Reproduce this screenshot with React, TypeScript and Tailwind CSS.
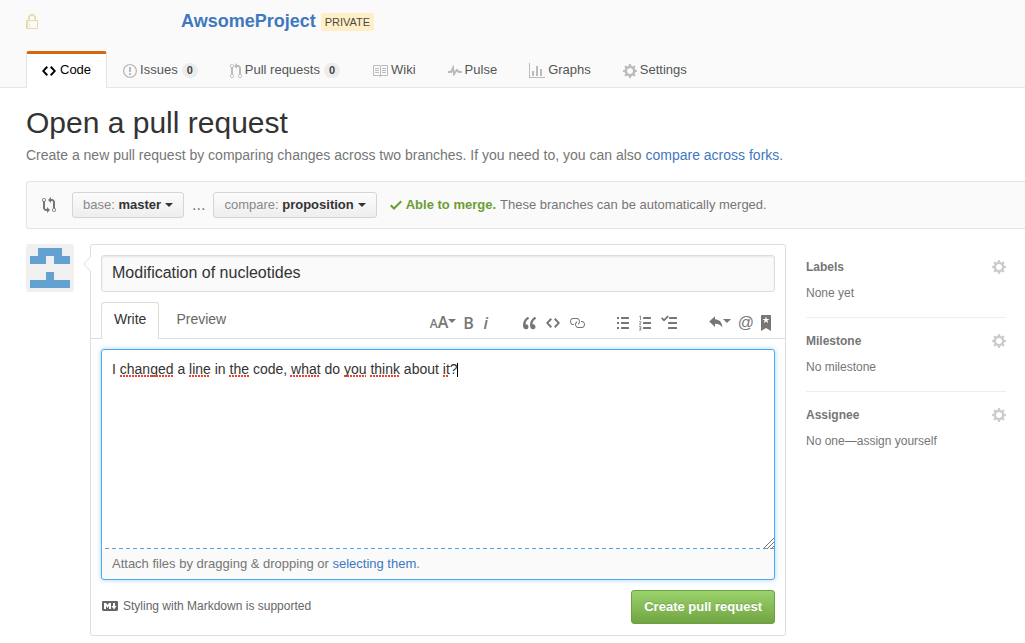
import React, { useState } from "react";

type GlyphProps = { d: string; w: number; h?: number; vb: string; className?: string };

function Glyph({ d, w, h = 16, vb, className = "" }: GlyphProps) {
  return (
    <svg width={w} height={h} viewBox={vb} fill="currentColor" aria-hidden="true" className={`shrink-0 ${className}`}>
      <path fillRule="evenodd" d={d} />
    </svg>
  );
}

const paths = {
  lock: "M4 13H3v-1h1v1zm8-6v7c0 .55-.45 1-1 1H1c-.55 0-1-.45-1-1V7c0-.55.45-1 1-1h1V4c0-2.2 1.8-4 4-4s4 1.8 4 4v2h1c.55 0 1 .45 1 1zM3.8 6h4.41V4c0-1.22-.98-2.2-2.2-2.2-1.22 0-2.2.98-2.2 2.2v2H3.8zM11 7H2v7h9V7zM4 8H3v1h1V8zm0 2H3v1h1v-1z",
  code: "M9.5 3L8 4.5 11.5 8 8 11.5 9.5 13 14 8 9.5 3zm-5 0L0 8l4.5 5L6 11.5 2.5 8 6 4.5 4.5 3z",
  issue: "M7 2.3c3.14 0 5.7 2.56 5.7 5.7s-2.56 5.7-5.7 5.7A5.71 5.71 0 0 1 1.3 8c0-3.14 2.56-5.7 5.7-5.7zM7 1C3.14 1 0 4.14 0 8s3.14 7 7 7 7-3.14 7-7-3.14-7-7-7zm1 3H6v5h2V4zm0 6H6v2h2v-2z",
  pull: "M11 11.28V5c-.03-.78-.34-1.47-.94-2.06C9.46 2.35 8.78 2.03 8 2H7V0L4 3l3 3V4h1c.27.02.48.11.69.31.21.2.3.42.31.69v6.28A1.993 1.993 0 0 0 10 15a1.993 1.993 0 0 0 1-3.72zm-1 2.92c-.66 0-1.2-.55-1.2-1.2 0-.65.55-1.2 1.2-1.2.65 0 1.2.55 1.2 1.2 0 .65-.55 1.2-1.2 1.2zM4 3c0-1.11-.89-2-2-2a1.993 1.993 0 0 0-1 3.72v6.56A1.993 1.993 0 0 0 2 15a1.993 1.993 0 0 0 1-3.72V4.72c.59-.34 1-.98 1-1.72zm-.8 10c0 .66-.55 1.2-1.2 1.2-.65 0-1.2-.55-1.2-1.2 0-.65.55-1.2 1.2-1.2.65 0 1.2.55 1.2 1.2zM2 4.2C1.34 4.2.8 3.65.8 3c0-.65.55-1.2 1.2-1.2.65 0 1.2.55 1.2 1.2 0 .65-.55 1.2-1.2 1.2z",
  book: "M3 5h4v1H3V5zm0 3h4V7H3v1zm0 2h4V9H3v1zm11-5h-4v1h4V5zm0 2h-4v1h4V7zm0 2h-4v1h4V9zm2-6v9c0 .55-.45 1-1 1H9.5l-1 1-1-1H2c-.55 0-1-.45-1-1V3c0-.55.45-1 1-1h5.5l1 1 1-1H15c.55 0 1 .45 1 1zm-8 .5L7.5 3H2v9h6V3.5zm7-.5H9.5l-.5.5V12h6V3z",
  pulse: "M11.5 8L8.8 5.4 6.6 8.5 5.5 1.6 2.38 8H0v2h3.6l.9-1.8.9 5.4L9 8.5l1.6 1.5H14V8h-2.5z",
  graph: "M16 14v1H0V0h1v14h15zM5 13H3V8h2v5zm4 0H7V3h2v10zm4 0h-2V6h2v7z",
  gear: "M14 8.77v-1.6l-1.94-.64-.45-1.09.88-1.84-1.13-1.13-1.81.91-1.09-.45-.69-1.92h-1.6l-.63 1.94-1.11.45-1.84-.88-1.13 1.13.91 1.81-.45 1.09L0 7.23v1.59l1.94.64.45 1.09-.88 1.84 1.13 1.13 1.81-.91 1.09.45.69 1.92h1.59l.63-1.94 1.11-.45 1.84.88 1.13-1.13-.92-1.81.47-1.09L14 8.75v.02zM7 11c-1.66 0-3-1.34-3-3s1.34-3 3-3 3 1.34 3 3-1.34 3-3 3z",
  compare: "M5 12H4c-.27-.02-.48-.11-.69-.31-.21-.2-.3-.42-.31-.69V4.72A1.993 1.993 0 0 0 2 1a1.993 1.993 0 0 0-1 3.72V11c.03.78.34 1.47.94 2.06.6.59 1.28.91 2.06.94h1v2l3-3-3-3v2zM2 1.8c.66 0 1.2.55 1.2 1.2 0 .65-.55 1.2-1.2 1.2C1.35 4.2.8 3.65.8 3c0-.65.55-1.2 1.2-1.2zm11 9.48V5c-.03-.78-.34-1.47-.94-2.06-.6-.59-1.28-.91-2.06-.94H9V0L6 3l3 3V4h1c.27.02.48.11.69.31.21.2.3.42.31.69v6.28A1.993 1.993 0 0 0 12 15a1.993 1.993 0 0 0 1-3.72zm-1 2.92c-.66 0-1.2-.55-1.2-1.2 0-.65.55-1.2 1.2-1.2.65 0 1.2.55 1.2 1.2 0 .65-.55 1.2-1.2 1.2z",
  check: "M12 5l-8 8-4-4 1.5-1.5L4 10l6.5-6.5L12 5z",
  quote: "M6.16 3.5C3.73 5.06 2.55 6.67 2.55 9.36c.16-.05.3-.05.44-.05 1.27 0 2.5.86 2.5 2.41 0 1.61-1.03 2.61-2.5 2.61-1.9 0-2.99-1.52-2.99-4.25 0-3.8 1.75-6.53 5.02-8.42L6.16 3.5zm7 0c-2.43 1.56-3.61 3.17-3.61 5.86.16-.05.3-.05.44-.05 1.27 0 2.5.86 2.5 2.41 0 1.61-1.03 2.61-2.5 2.61-1.89 0-2.98-1.52-2.98-4.25 0-3.8 1.75-6.53 5.02-8.42l1.14 1.84h-.01z",
  link: "M4 9h1v1H4c-1.5 0-3-1.69-3-3.5S2.55 3 4 3h4c1.45 0 3 1.69 3 3.5 0 1.41-.91 2.72-2 3.25V8.59c.58-.45 1-1.27 1-2.09C10 5.22 8.98 4 8 4H4c-.98 0-2 1.22-2 2.5S3 9 4 9zm9-3h-1v1h1c1 0 2 1.22 2 2.5S13.98 12 13 12H9c-.98 0-2-1.22-2-2.5 0-.83.42-1.64 1-2.09V6.25c-1.09.53-2 1.84-2 3.25C6 11.31 7.55 13 9 13h4c1.45 0 3-1.69 3-3.5S14.5 6 13 6z",
  reply: "M6 4.3c4.2.3 7 2.7 7.4 7.9C11.6 9.9 9.3 8.8 6 8.8V12L.2 6.5 6 1.2z",
  bookmark: "M9 0H1C.27 0 0 .27 0 1v15l5-3.09L10 16V1c0-.73-.27-1-1-1zm-.78 4.25L6.36 5.61l.72 2.16c.06.22-.02.28-.2.17L5 6.6 3.12 7.94c-.19.11-.25.05-.2-.17l.72-2.16-1.86-1.36c-.17-.16-.14-.23.09-.23l2.3-.03.7-2.16h.25l.7 2.16 2.3.03c.23 0 .27.08.09.23h.01z",
  markdown: "M14.85 3H1.15C.52 3 0 3.52 0 4.15v7.69C0 12.48.52 13 1.15 13h13.69c.64 0 1.15-.52 1.15-1.15v-7.7C16 3.52 15.48 3 14.85 3zM9 11H7V8L5.5 9.92 4 8v3H2V5h2l1.5 2L7 5h2v6zm2.99.5L9.5 8H11V5h2v3h1.5l-2.51 3.5z",
};

function Caret() {
  return (
    <svg width="8" height="4" viewBox="0 0 8 4" fill="currentColor" aria-hidden="true" className="shrink-0">
      <path d="M0 0h8L4 4z" />
    </svg>
  );
}

function ListIcon({ kind }: { kind: "bullets" | "numbers" | "tasks" }) {
  const long = kind === "tasks";
  return (
    <svg width={long ? 16 : 12} height="16" viewBox={long ? "0 0 16 16" : "0 0 12 16"} fill="currentColor" aria-hidden="true" className="shrink-0">
      <rect x={long ? 8 : 4} y="2" width="8" height="2" rx="0.5" />
      <rect x={long ? 7 : 4} y="7" width={long ? 9 : 8} height="2" rx="0.5" />
      <rect x={long ? 7 : 4} y="12" width={long ? 9 : 8} height="2" rx="0.5" />
      {kind === "bullets" && <path d="M0 2h2v2H0zM0 7h2v2H0zM0 12h2v2H0z" />}
      {kind === "numbers" && (
        <path d="M.3 1.4 1.5 1v4M0 6.7h1.8v1.2L.3 9.4H2M0 11.5h1.8v3.6H0M.4 13.3h1.4" fill="none" stroke="currentColor" strokeWidth="0.8" />
      )}
      {kind === "tasks" && <path d="M0 3.5 1.2 2.3 3 4 6.5.5 7.8 1.7 3 6.5z" />}
    </svg>
  );
}

function NavTab({ icon, label, count }: { icon: React.ReactNode; label: string; count?: number }) {
  return (
    <a href="#" className="flex h-9 items-center gap-[3px] px-4 text-[13px] text-[#555]">
      <span className="pt-[2px] text-[#bbb]">{icon}</span>
      <span>{label}</span>
      {count !== undefined && (
        <span className="ml-px rounded-full bg-[#ececec] px-[5px] text-[11px] leading-[15px] font-bold text-[#444]">{count}</span>
      )}
    </a>
  );
}

function BranchButton({ kind, name }: { kind: string; name: string }) {
  return (
    <button type="button" className="flex h-[26px] items-center gap-1 rounded-[3px] border border-[#d5d5d5] bg-linear-to-b from-[#fcfcfc] to-[#eee] px-[10px] text-[13px] text-[#888]">
      <span>
        {kind}: <b className="text-[#333]">{name}</b>
      </span>
      <span className="text-[#333]"><Caret /></span>
    </button>
  );
}

function Tool({ label, children }: { label: string; children: React.ReactNode }) {
  return (
    <button type="button" aria-label={label} className="flex h-5 items-center">
      {children}
    </button>
  );
}

function SideSection({ title, children }: { title: string; children: React.ReactNode }) {
  return (
    <section className="border-b border-[#eee] pt-[14px] pb-[15px] text-[12px] leading-[18px] text-[#767676] last:border-0">
      <div className="mb-2 flex items-center justify-between">
        <h2 className="font-bold">{title}</h2>
        <button type="button" aria-label={`Edit ${title}`} className="text-[#ccc]">
          <Glyph d={paths.gear} w={14} vb="0 0 14 16" />
        </button>
      </div>
      <p>{children}</p>
    </section>
  );
}

const misspelled = [
  [8, 61], [77, 98], [117, 137], [178, 207], [232, 254], [258, 288], [331, 336],
];

export default function App() {
  const [title, setTitle] = useState("Modification of nucleotides");
  const [body, setBody] = useState("I changed a line in the code, what do you think about it?");
  return (
    <div className="min-h-screen overflow-hidden bg-white font-['Liberation_Sans',Arial,sans-serif] text-[13px] text-[#333]">
      <header className="border-b border-[#e8e8e8] bg-[#fafafa] pl-[26px]">
        <div className="flex h-[51px] items-center pb-2">
          <Glyph d={paths.lock} w={12} vb="0 0 12 16" className="mr-[143px] text-[#e9dba5]" />
          <a href="#" className="text-[18px] font-bold text-[#4078c0]">AwsomeProject</a>
          <span className="ml-[5px] rounded-[3px] bg-[#ffefc6] px-1 text-[11px] leading-[18px] text-[#4c4a42]">PRIVATE</span>
        </div>
        <nav className="-mb-px flex h-[37px] items-end">
          <a href="#" aria-current="page" className="flex h-[37px] items-center gap-1 rounded-t-[3px] border-x border-t-3 border-x-[#e5e5e5] border-t-[#d26911] bg-white px-[15px] pb-[2px] text-[13px] text-black">
            <Glyph d={paths.code} w={14} vb="0 0 14 16" className="mt-[2px]" />
            Code
          </a>
          <NavTab icon={<Glyph d={paths.issue} w={14} vb="0 0 14 16" />} label="Issues" count={0} />
          <NavTab icon={<Glyph d={paths.pull} w={12} vb="0 0 12 16" />} label="Pull requests" count={0} />
          <NavTab icon={<Glyph d={paths.book} w={16} vb="0 0 16 16" />} label="Wiki" />
          <NavTab icon={<Glyph d={paths.pulse} w={14} vb="0 0 14 16" />} label="Pulse" />
          <NavTab icon={<Glyph d={paths.graph} w={16} vb="0 0 16 16" />} label="Graphs" />
          <NavTab icon={<Glyph d={paths.gear} w={14} vb="0 0 14 16" />} label="Settings" />
        </nav>
      </header>

      <main className="pl-[26px]">
        <h1 className="pt-[15px] text-[30px] leading-[40px] text-[#333]">Open a pull request</h1>
        <p className="mt-[2px] text-[14px] leading-[21px] text-[#767676]">
          Create a new pull request by comparing changes across two branches. If you need to, you can also{" "}
          <a href="#" className="text-[#4078c0]">compare across forks</a>.
        </p>

        <div className="mt-[15px] flex h-12 items-center rounded-l-[3px] border border-r-0 border-[#e5e5e5] bg-[#fafafa] pl-[15px] text-[13px] text-[#767676]">
          <Glyph d={paths.compare} w={14} vb="0 0 14 16" className="mr-4" />
          <BranchButton kind="base" name="master" />
          <span className="px-2 text-[16px] leading-5">...</span>
          <BranchButton kind="compare" name="proposition" />
          <span className="ml-[13px] flex items-center gap-1 font-bold text-[#6b9e32]">
            <Glyph d={paths.check} w={12} vb="0 0 12 16" />
            Able to merge.
          </span>
          <span className="ml-1">These branches can be automatically merged.</span>
        </div>

        <div className="mt-[15px] flex items-start pr-[19px]">
          <svg width="48" height="48" viewBox="0 0 48 48" aria-label="Avatar" role="img" className="shrink-0">
            <rect width="48" height="48" rx="3" fill="#f0f0f0" />
            <path d="M12 4h24v8h8v8H28v-8h-8v8H4v-8h8zM20 28h8v8h16v8H4v-8h16z" fill="#62a1d0" />
          </svg>

          <form className="relative ml-4 min-w-0 flex-1 rounded-[3px] border border-[#ddd]" onSubmit={(e) => e.preventDefault()}>
            <svg width="8" height="16" viewBox="0 0 8 16" aria-hidden="true" className="absolute top-[11px] -left-2">
              <path d="M8 0 .7 8 8 16" fill="#fff" stroke="#ddd" />
            </svg>
            <div className="px-[10px] pt-[10px]">
              <input
                aria-label="Title"
                value={title}
                onChange={(e) => setTitle(e.target.value)}
                className="block h-[37px] w-full rounded-[3px] border border-[#ddd] bg-[#fafafa] px-[10px] pb-[2px] text-[16px] text-[#333] shadow-[inset_0_1px_2px_rgba(0,0,0,0.075)] outline-none"
              />
            </div>

            <div className="mt-[10px] flex h-[37px] items-stretch border-b border-[#ddd] px-[10px] text-[14px]">
              <button type="button" className="-mb-px rounded-t-[3px] border border-b-0 border-[#ddd] bg-white px-3 pb-[3px] text-[#333]">Write</button>
              <button type="button" className="px-[17px] pb-[2px] text-[#666]">Preview</button>
              <div className="ml-auto flex items-center pt-[6px] pr-1 text-[#767676]">
                <div className="flex gap-[7px] font-['Open_Sans',sans-serif] font-semibold">
                  <Tool label="Text size">
                    <span className="flex items-baseline leading-4"><span className="text-[12px]">A</span><span className="text-[16px]">A</span></span>
                    <span className="pb-1"><Caret /></span>
                  </Tool>
                  <Tool label="Bold"><span className="text-[16px] leading-4">B</span></Tool>
                  <Tool label="Italic"><i className="w-[10px] text-[16px] leading-4">i</i></Tool>
                </div>
                <div className="ml-8 flex gap-[9px]">
                  <Tool label="Quote"><Glyph d={paths.quote} w={14} vb="0 0 14 16" /></Tool>
                  <Tool label="Code"><Glyph d={paths.code} w={14} vb="0 0 14 16" /></Tool>
                  <Tool label="Link"><Glyph d={paths.link} w={16} vb="0 0 16 16" /></Tool>
                </div>
                <div className="ml-8 flex gap-[10px]">
                  <Tool label="Bulleted list"><ListIcon kind="bullets" /></Tool>
                  <Tool label="Numbered list"><ListIcon kind="numbers" /></Tool>
                  <Tool label="Task list"><ListIcon kind="tasks" /></Tool>
                </div>
                <div className="ml-8 flex gap-[7px]">
                  <Tool label="Saved replies"><Glyph d={paths.reply} w={14} vb="0 0 14 16" /><span className="pb-1"><Caret /></span></Tool>
                  <Tool label="Mention"><span className="pb-px text-[16px] leading-4">@</span></Tool>
                  <Tool label="Reference"><Glyph d={paths.bookmark} w={10} vb="0 0 10 16" /></Tool>
                </div>
              </div>
            </div>

            <div className="p-[10px]">
              <div className="rounded-[3px] border border-[#51a7e8] bg-[#fafafa] shadow-[0_0_5px_rgba(81,167,232,0.5)]">
                <div className="relative">
                  <textarea
                    aria-label="Comment"
                    spellCheck={false}
                    value={body}
                    onChange={(e) => setBody(e.target.value)}
                    className="block h-[198px] w-full resize-none rounded-t-[3px] bg-white px-[10px] py-[9px] text-[14px] leading-5 text-[#333] outline-none"
                  />
                  <svg width="100%" height="1" aria-hidden="true" className="block bg-white">
                    <path d="M3 .5H4000" stroke="#51a7e8" strokeDasharray="4 3" />
                  </svg>
                  <svg width="350" height="20" viewBox="0 0 350 20" aria-hidden="true" className="pointer-events-none absolute top-[9px] left-[10px]">
                    {misspelled.map(([a, b]) => (
                      <path key={a} d={`M${a} 17H${b}`} stroke="#f0402f" strokeWidth="2" strokeDasharray="2 1" />
                    ))}
                    <path d="M345.5 4v14" stroke="#000" />
                  </svg>
                  <svg width="12" height="12" viewBox="0 0 12 12" aria-hidden="true" className="pointer-events-none absolute right-0 bottom-0">
                    <path d="M1 12 12 1M5 12l7-7M9 12l3-3" stroke="#777" />
                  </svg>
                </div>
                <p className="px-[10px] pt-1 pb-[5px] text-[13px] leading-[21px] text-[#767676]">
                  Attach files by dragging &amp; dropping or <a href="#" className="text-[#4078c0]">selecting them</a>.
                </p>
              </div>
              <div className="mt-[10px] mb-px flex items-center justify-between">
                <a href="#" className="flex items-center gap-[5px] pb-[2px] pl-px text-[12px] text-[#666]">
                  <Glyph d={paths.markdown} w={16} vb="0 0 16 16" />
                  Styling with Markdown is supported
                </a>
                <button type="submit" className="h-[34px] rounded-[3px] border border-[#6ba044] bg-linear-to-b from-[#9bd26b] to-[#71a543] px-3 text-[13px] font-bold text-white [text-shadow:0_-1px_0_rgba(0,0,0,0.15)]">
                  Create pull request
                </button>
              </div>
            </div>
          </form>

          <aside className="ml-5 w-[200px] shrink-0">
            <SideSection title="Labels">None yet</SideSection>
            <SideSection title="Milestone">No milestone</SideSection>
            <SideSection title="Assignee">
              No one—<a href="#">assign yourself</a>
            </SideSection>
          </aside>
        </div>
      </main>
    </div>
  );
}
